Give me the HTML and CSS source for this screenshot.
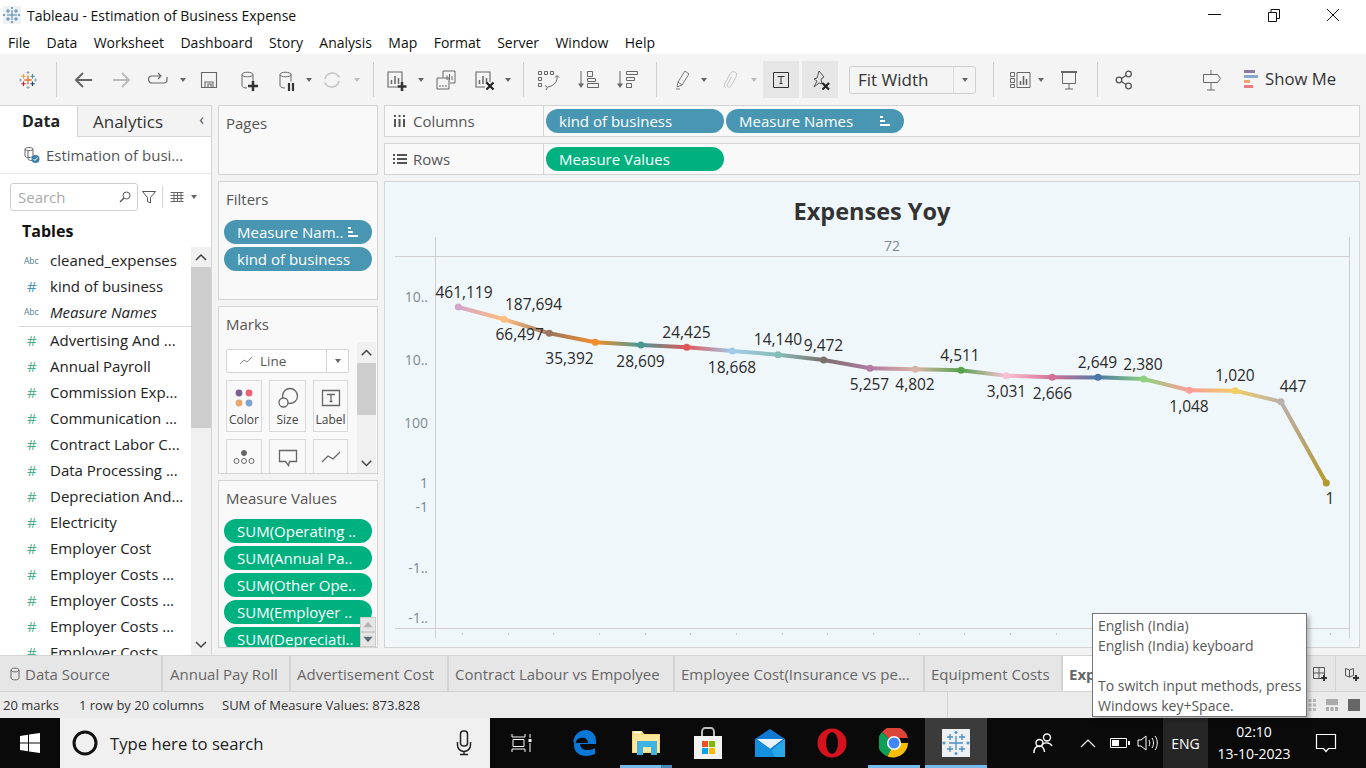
FILE: index.html
```html
<!DOCTYPE html>
<html lang="en">

<head>
  <meta charset="UTF-8" />
  <title>Tableau - Estimation of Business Expense</title>
  <link rel="stylesheet" href="styles.css">
</head>

<body>
  <svg class="defs" width="0" height="0">
    <symbol id="caret" viewBox="0 0 8 8"><path d="M1 2h6L4 6z" fill="#666" /></symbol>
    <symbol id="caret-off" viewBox="0 0 8 8"><path d="M1 2h6L4 6z" fill="#bbb" /></symbol>
    <symbol id="sortbars" viewBox="0 0 10 10"><path d="M0 0h3v2H0zM0 4h5v2H0zM0 8h10v2H0z" fill="#fff" /></symbol>
  </svg>

  <!-- title bar -->
  <div class="titlebar">
    <svg class="app-icon" width="18" height="18" viewBox="0 0 18 18">
      <rect width="18" height="18" fill="#eef1f4" />
      <path d="M9 4v10M4 9h10M5 3v4M3 5h4M13 3v4M11 5h4M5 11v4M3 13h4M13 11v4M11 13h4M9 1v2M8 2h2M9 15v2M8 16h2M1 8v2M0 9h2M16 8v2M15 9h2" stroke="#4f86ad" fill="none" />
    </svg>
    <span class="title-text">Tableau - Estimation of Business Expense</span>
    <div class="winbtns">
      <svg width="16" height="16" viewBox="0 0 16 16"><path d="M1 7.500h13" stroke="#111" /></svg>
      <svg width="16" height="16" viewBox="0 0 16 16"><path d="M2.500 5.500h8v9h-8zM5 5V2.500h8.500v9H11" stroke="#111" fill="none" /></svg>
      <svg width="16" height="16" viewBox="0 0 16 16"><path d="M2 2l12 12M14 2L2 14" stroke="#111" /></svg>
    </div>
  </div>

  <!-- menu -->
  <div class="menubar">
    <span>File</span><span>Data</span><span>Worksheet</span><span>Dashboard</span><span>Story</span><span>Analysis</span><span>Map</span><span>Format</span><span>Server</span><span>Window</span><span>Help</span>
  </div>

  <!-- toolbar -->
  <div class="toolbar">
    <svg class="logo" viewBox="0 0 24 24">
      <path d="M12 6v12M7 12h10" stroke="#e8762d" stroke-width="1.800" />
      <path d="M6 4v6M3 7h6" stroke="#f2a02e" stroke-width="1.600" />
      <path d="M18 4v6M15 7h6" stroke="#5b879b" stroke-width="1.600" />
      <path d="M6 14v6M3 17h6" stroke="#c72035" stroke-width="1.600" />
      <path d="M18 14v6M15 17h6" stroke="#1f447a" stroke-width="1.600" />
      <path d="M12 0v4M10 2h4M12 20v4M10 22h4M2 10v4M0 12h4M22 10v4M20 12h4" stroke="#8aa0b2" stroke-width="1.300" />
    </svg>
    <i class="sep m19"></i>
    <svg class="tool m14" viewBox="0 0 24 24"><path d="M21 12H5M12 5l-7 7 7 7" fill="none" stroke="#666" stroke-width="2" /></svg>
    <svg class="tool m15" viewBox="0 0 24 24"><path d="M3 12h16M12 5l7 7-7 7" fill="none" stroke="#bcbcbc" stroke-width="2" /></svg>
    <svg class="tool m12" viewBox="0 0 24 24"><path d="M14 8H6a3 3 0 0 0 0 7h12a3 3 0 0 0 3-3.500V9M12 5l3 3-3 3" fill="none" stroke="#666" stroke-width="1.200" /></svg>
    <svg class="caret m9"><use href="#caret" /></svg>
    <svg class="tool m10" viewBox="0 0 24 24"><path d="M4.500 4.500h15v15h-15zM8 19v-5h8v5M11 19v-3h3v3" fill="none" stroke="#666" stroke-width="1.100" /></svg>
    <svg class="tool m15" viewBox="0 0 24 24">
      <path d="M6 6.500c0-3 11-3 11 0v7M6 6.500v11c0 1.500 2 2.500 5 2.500M6 6.500c0 3 11 3 11 0" fill="none" stroke="#666" />
      <path d="M17 13v10M12 18h10" stroke="#333" stroke-width="2.500" />
    </svg>
    <svg class="tool m14" viewBox="0 0 24 24">
      <path d="M6 6.500c0-3 11-3 11 0v7M6 6.500v11c0 1.500 2 2.500 5 2.500M6 6.500c0 3 11 3 11 0" fill="none" stroke="#666" />
      <path d="M15 15v8M19 15v8" stroke="#333" stroke-width="2.200" />
    </svg>
    <svg class="caret m7"><use href="#caret" /></svg>
    <svg class="tool m7" viewBox="0 0 24 24"><path d="M5 11a7.500 7.500 0 0 1 13-3.500l1.500 2M19 13a7.500 7.500 0 0 1-13 3.500L4.500 14.500" fill="none" stroke="#c4c4c4" stroke-width="1.500" /></svg>
    <svg class="caret m9"><use href="#caret-off" /></svg>
    <i class="sep m12"></i>
    <svg class="tool m10" viewBox="0 0 24 24">
      <path d="M18 16V4H4v15h9" fill="none" stroke="#666" stroke-width="1.100" />
      <path d="M7.500 16v-4M11 16V8M14.500 16v-6" stroke="#666" stroke-width="1.500" />
      <path d="M18 14v9M13.500 18.500h9" stroke="#333" stroke-width="2.500" />
    </svg>
    <svg class="caret m9"><use href="#caret" /></svg>
    <svg class="tool m9" viewBox="0 0 24 24">
      <path d="M9 9.500V3h12v12h-5M3 10h12v11H3z" fill="none" stroke="#666" />
      <path d="M13 12V7.500M15.500 12V6M18 12V8M6 19v-2M9 19v-2M12 19v-2" stroke="#666" />
    </svg>
    <svg class="tool m14" viewBox="0 0 24 24">
      <path d="M18 14V4H4v15h9" fill="none" stroke="#666" stroke-width="1.100" />
      <path d="M7.500 16v-4M11 16V8M14.500 16v-6" stroke="#666" stroke-width="1.500" />
      <path d="M14.500 14.500l7 7M21.500 14.500l-7 7" stroke="#222" stroke-width="2.200" />
    </svg>
    <svg class="caret m8"><use href="#caret" /></svg>
    <i class="sep m11"></i>
    <svg class="tool m12" viewBox="0 0 24 24" fill="none" stroke="#666">
      <path d="M2.500 3.500h3v3h-3zM8.500 3.500h3v3h-3zM14.500 3.500h3v3h-3zM2.500 9.500h3v3h-3zM2.500 15.500h3v3h-3z" />
      <path d="M21 8c1 5-3 10-9 11M9 17.500l2.500 2 -1.500 2.500M19 9.500l2-2 2 2" />
    </svg>
    <svg class="tool m16" viewBox="0 0 24 24" fill="none" stroke="#666">
      <path d="M5 3v15" />
      <path d="M2 15.500h6L5 20z" fill="#666" stroke="none" />
      <path d="M11.500 3.500h5v5h-5zM11.500 10.500h8v3h-8zM11.500 15.500h11v4h-11z" />
    </svg>
    <svg class="tool m15" viewBox="0 0 24 24" fill="none" stroke="#666">
      <path d="M5 3v15" />
      <path d="M2 15.500h6L5 20z" fill="#666" stroke="none" />
      <path d="M11.500 3.500h11v3h-11zM11.500 9.500h8v3h-8zM11.500 15.500h5v4h-5z" />
    </svg>
    <i class="sep m17"></i>
    <svg class="tool m13" viewBox="0 0 24 24"><path d="M15 3l4 3-7 11-4-3zM8 14l-1 5 5-2M6 21h4" fill="none" stroke="#777" /></svg>
    <svg class="caret m6"><use href="#caret" /></svg>
    <svg class="tool m10" viewBox="0 0 24 24"><path d="M8 20c-2-1-2-3-1-5l5-9c1-2 3-3 5-2s2 3 1 5l-5 9c-.6 1-2 1.500-3 1s-1-2-.5-3l4-7" fill="none" stroke="#c4c4c4" /></svg>
    <svg class="caret m8"><use href="#caret-off" /></svg>
    <div class="tbox m5">
      <svg width="24" height="24" viewBox="0 0 24 24"><path d="M4.500 4.500h15v15h-15zM8.500 8.500h7M12 8.500v7M10.500 15.500h3" fill="none" stroke="#333" /></svg>
    </div>
    <div class="tbox m3">
      <svg width="24" height="24" viewBox="0 0 24 24">
        <path d="M11 3l5 6-3 2 1 5-3-1-5 4 3-6-3-2 3-1z" fill="none" stroke="#555" />
        <path d="M14.500 15l6.500 6.500M21 15l-6.500 6.500" stroke="#222" stroke-width="2.200" />
      </svg>
    </div>
    <div class="fit m11"><span class="fit-text">Fit Width</span><span class="fit-arrow"><svg class="caret"><use href="#caret" /></svg></span></div>
    <i class="sep m17"></i>
    <svg class="tool m14" viewBox="0 0 24 24" fill="none" stroke="#666">
      <path d="M2.500 4.500h4v4h-4zM2.500 10.500h4v4h-4zM2.500 16.500h4v3h-4zM9 4.500h13v15H9z" />
      <path d="M12.500 17v-4M15.500 17V8M18.500 17v-6" stroke-width="1.600" />
    </svg>
    <svg class="caret m5"><use href="#caret" /></svg>
    <svg class="tool m12" viewBox="0 0 24 24" fill="none" stroke="#666"><path d="M4 4h16" stroke-width="2" /><path d="M5.500 4.500v11h13v-11M12 15.500V21M8 21h8" /></svg>
    <i class="sep m16"></i>
    <svg class="tool m14" viewBox="0 0 24 24" fill="none" stroke="#555" stroke-width="1.300"><circle cx="16.500" cy="6" r="2.800" /><circle cx="16.500" cy="18" r="2.800" /><circle cx="7" cy="12" r="2.800" /><path d="M9.500 10.500L14 7.500M9.500 13.500L14 16.500" /></svg>
    <svg class="tool m63" viewBox="0 0 24 24" fill="none" stroke="#666"><path d="M12 2v4M12 15v7M8 22h8M4.500 6.500h14l3 4-3 4h-14z" /></svg>
    <div class="showme m21">
      <svg width="14" height="20" viewBox="0 0 14 20"><path d="M0 1h11v3H0z" fill="#8a7a9b" /><path d="M0 6h14v3H0z" fill="#8aa8cc" /><path d="M0 11h6v3H0z" fill="#eda56f" /><path d="M0 16h9v3H0z" fill="#ec7a85" /></svg>
      <span>Show Me</span>
    </div>
  </div>

  <div class="workspace">
    <!-- data pane -->
    <div class="datapane">
      <div class="panetabs">
        <div class="panetab active">Data</div>
        <div class="panetab">Analytics<span class="chev">&#8249;</span></div>
      </div>
      <div class="source">
        <svg width="18" height="18" viewBox="0 0 18 18" fill="none" stroke="#666"><path d="M2 3c0-2 8-2 8 0v7c0 1-2 1.500-4 1.500S2 11 2 10zM2 3c0 2 8 2 8 0M5 5v8c0 1 2 1.500 4 1.500" /><circle cx="12.500" cy="13" r="4" fill="#3f80ab" stroke="none" /><path d="M10.500 13l1.500 1.500 2.500-3" stroke="#fff" /></svg>
        <span>Estimation of busi...</span>
      </div>
      <div class="searchrow">
        <div class="search"><span>Search</span>
          <svg width="14" height="14" viewBox="0 0 14 14" fill="none" stroke="#555"><circle cx="8.500" cy="5.500" r="3.500" /><path d="M6 8l-4 4" stroke-width="1.400" /></svg>
        </div>
        <svg class="funnel" width="16" height="16" viewBox="0 0 16 16" fill="none" stroke="#555"><path d="M1.500 2.500h13L9.500 8.500V14l-3-1.500v-4z" /></svg>
        <i class="vline"></i>
        <svg width="14" height="12" viewBox="0 0 14 12" fill="none" stroke="#666"><path d="M.5 1.500h13M.5 4.500h13M.5 7.500h13M.5 10.500h13M4 1v10M7.500 1v10M11 1v10" /></svg>
        <svg class="caret" viewBox="0 0 8 8"><use href="#caret" /></svg>
      </div>
      <h3 class="tables">Tables</h3>
      <div class="fieldarea">
        <ul class="fields">
          <li><b class="abc">Abc</b>cleaned_expenses</li>
          <li><b class="hash dim">#</b>kind of business</li>
          <li class="schema-end"><b class="abc">Abc</b><em>Measure Names</em></li>
          <li><b class="hash">#</b>Advertising And ...</li>
          <li><b class="hash">#</b>Annual Payroll</li>
          <li><b class="hash">#</b>Commission Exp...</li>
          <li><b class="hash">#</b>Communication ...</li>
          <li><b class="hash">#</b>Contract Labor C...</li>
          <li><b class="hash">#</b>Data Processing ...</li>
          <li><b class="hash">#</b>Depreciation And...</li>
          <li><b class="hash">#</b>Electricity</li>
          <li><b class="hash">#</b>Employer Cost</li>
          <li><b class="hash">#</b>Employer Costs ...</li>
          <li><b class="hash">#</b>Employer Costs ...</li>
          <li><b class="hash">#</b>Employer Costs ...</li>
          <li><b class="hash">#</b>Employer Costs</li>
        </ul>
        <div class="vscroll field-scroll">
          <svg class="arrow" viewBox="0 0 20 20"><path d="M5 13l5-5 5 5" fill="none" stroke="#444" stroke-width="1.500" /></svg>
          <div class="thumb"></div>
          <svg class="arrow end" viewBox="0 0 20 20"><path d="M5 7l5 5 5-5" fill="none" stroke="#444" stroke-width="1.500" /></svg>
        </div>
      </div>
    </div>

    <!-- shelves cards -->
    <div class="cards">
      <div class="card pages"><div class="card-title">Pages</div></div>
      <div class="card filters">
        <div class="card-title">Filters</div>
        <div class="pill blue wide">Measure Nam..<svg class="sort" viewBox="0 0 10 10"><use href="#sortbars" /></svg></div>
        <div class="pill blue wide">kind of business</div>
      </div>
      <div class="card marks">
        <div class="card-title">Marks</div>
        <div class="marks-body">
          <div class="marks-main">
            <div class="marktype">
              <span class="mt-label">
                <svg width="14" height="10" viewBox="0 0 14 10"><path d="M1 8l4-4 3 2 5-5" fill="none" stroke="#888" /></svg>
                Line
              </span>
              <span class="mt-arrow"><svg class="caret"><use href="#caret" /></svg></span>
            </div>
            <div class="markbtns">
              <div class="markbtn">
                <svg width="24" height="24" viewBox="0 0 24 24"><circle cx="7" cy="7" r="3.400" fill="#7b5e93" /><circle cx="17" cy="7" r="3.400" fill="#ec5e78" /><circle cx="7" cy="17" r="3.400" fill="#eda56f" /><circle cx="17" cy="17" r="3.400" fill="#7ea3cf" /></svg>
                <span>Color</span>
              </div>
              <div class="markbtn">
                <svg width="24" height="24" viewBox="0 0 24 24" fill="none" stroke="#666" stroke-width="1.300"><circle cx="14" cy="10" r="7.500" /><circle cx="7.500" cy="16.500" r="4.500" fill="#f9f9f9" /></svg>
                <span>Size</span>
              </div>
              <div class="markbtn">
                <svg width="24" height="24" viewBox="0 0 24 24" fill="none" stroke="#666" stroke-width="1.300"><path d="M3.500 4.500h17v15h-17zM8 8.500h8M12 8.500v7M10.500 15.500h3" /></svg>
                <span>Label</span>
              </div>
              <div class="markbtn">
                <svg width="24" height="24" viewBox="0 0 24 24" fill="none" stroke="#666"><circle cx="12" cy="8" r="2.500" fill="#666" /><circle cx="4.500" cy="16" r="2.500" /><circle cx="12" cy="16" r="2.500" /><circle cx="19.500" cy="16" r="2.500" /></svg>
              </div>
              <div class="markbtn">
                <svg width="24" height="24" viewBox="0 0 24 24" fill="none" stroke="#666" stroke-width="1.300"><path d="M3.500 5.500h17v11h-7l-1 4-3-4h-6z" /></svg>
              </div>
              <div class="markbtn">
                <svg width="24" height="24" viewBox="0 0 24 24" fill="none" stroke="#666" stroke-width="1.300"><path d="M3 17l6-6 5 3 7-7" /></svg>
              </div>
            </div>
          </div>
          <div class="vscroll marks-scroll">
            <svg class="arrow" viewBox="0 0 20 20"><path d="M5 13l5-5 5 5" fill="none" stroke="#444" stroke-width="1.500" /></svg>
            <div class="thumb"></div>
            <svg class="arrow end" viewBox="0 0 20 20"><path d="M5 7l5 5 5-5" fill="none" stroke="#444" stroke-width="1.500" /></svg>
          </div>
        </div>
      </div>
      <div class="card values">
        <div class="card-title">Measure Values</div>
        <div class="pill green wide">SUM(Operating ..</div>
        <div class="pill green wide">SUM(Annual Pa..</div>
        <div class="pill green wide">SUM(Other Ope..</div>
        <div class="pill green wide">SUM(Employer ..</div>
        <div class="pill green wide">SUM(Depreciati..</div>
        <div class="miniscroll">
          <span><svg viewBox="0 0 14 14"><path d="M2 10h10L7 4z" fill="#b3b3b3" /></svg></span>
          <span><svg viewBox="0 0 14 14"><path d="M2 4h10L7 10z" fill="#5d6b78" /></svg></span>
        </div>
      </div>
    </div>

    <!-- shelves and view -->
    <div class="viewcol">
      <div class="shelf">
        <div class="shelf-label">
          <svg width="14" height="12" viewBox="0 0 14 12"><path d="M2 4v8M6.500 4v8M11 4v8M2 0v2M6.500 0v2M11 0v2" stroke="#555" stroke-width="2" /></svg>
          <span>Columns</span>
        </div>
        <div class="pill blue long">kind of business</div>
        <div class="pill blue long">Measure Names<svg class="sort" viewBox="0 0 10 10"><use href="#sortbars" /></svg></div>
      </div>
      <div class="shelf">
        <div class="shelf-label">
          <svg width="14" height="12" viewBox="0 0 14 12"><path d="M0 2h2M4 2h10M0 6h2M4 6h10M0 10h2M4 10h10" stroke="#555" stroke-width="2" /></svg>
          <span>Rows</span>
        </div>
        <div class="pill green long">Measure Values</div>
      </div>
      <div class="view">
        <svg class="chart" width="976" height="467" viewBox="384 181 976 467">
          <defs>
            <linearGradient id="s1" gradientUnits="userSpaceOnUse" x1="458.300" y1="307" x2="504" y2="319.300"><stop offset="0" stop-color="#d4a6c8" /><stop offset="1" stop-color="#ffbe7d" /></linearGradient>
            <linearGradient id="s2" gradientUnits="userSpaceOnUse" x1="504" y1="319.300" x2="549.300" y2="333.300"><stop offset="0" stop-color="#ffbe7d" /><stop offset="1" stop-color="#9d7660" /></linearGradient>
            <linearGradient id="s3" gradientUnits="userSpaceOnUse" x1="549.300" y1="333.300" x2="595.300" y2="342.300"><stop offset="0" stop-color="#9d7660" /><stop offset="1" stop-color="#f28e2b" /></linearGradient>
            <linearGradient id="s4" gradientUnits="userSpaceOnUse" x1="595.300" y1="342.300" x2="641" y2="345"><stop offset="0" stop-color="#f28e2b" /><stop offset="1" stop-color="#499894" /></linearGradient>
            <linearGradient id="s5" gradientUnits="userSpaceOnUse" x1="641" y1="345" x2="686.700" y2="347.300"><stop offset="0" stop-color="#499894" /><stop offset="1" stop-color="#e15759" /></linearGradient>
            <linearGradient id="s6" gradientUnits="userSpaceOnUse" x1="686.700" y1="347.300" x2="732.300" y2="351"><stop offset="0" stop-color="#e15759" /><stop offset="1" stop-color="#a0cbe8" /></linearGradient>
            <linearGradient id="s7" gradientUnits="userSpaceOnUse" x1="732.300" y1="351" x2="778" y2="354.700"><stop offset="0" stop-color="#a0cbe8" /><stop offset="1" stop-color="#86bcb6" /></linearGradient>
            <linearGradient id="s8" gradientUnits="userSpaceOnUse" x1="778" y1="354.700" x2="823.700" y2="360"><stop offset="0" stop-color="#86bcb6" /><stop offset="1" stop-color="#79706e" /></linearGradient>
            <linearGradient id="s9" gradientUnits="userSpaceOnUse" x1="823.700" y1="360" x2="870" y2="368.300"><stop offset="0" stop-color="#79706e" /><stop offset="1" stop-color="#b07aa1" /></linearGradient>
            <linearGradient id="s10" gradientUnits="userSpaceOnUse" x1="870" y1="368.300" x2="915.300" y2="369.300"><stop offset="0" stop-color="#b07aa1" /><stop offset="1" stop-color="#d7b5a6" /></linearGradient>
            <linearGradient id="s11" gradientUnits="userSpaceOnUse" x1="915.300" y1="369.300" x2="961" y2="370.300"><stop offset="0" stop-color="#d7b5a6" /><stop offset="1" stop-color="#59a14f" /></linearGradient>
            <linearGradient id="s12" gradientUnits="userSpaceOnUse" x1="961" y1="370.300" x2="1006.300" y2="375.700"><stop offset="0" stop-color="#59a14f" /><stop offset="1" stop-color="#fabfd2" /></linearGradient>
            <linearGradient id="s13" gradientUnits="userSpaceOnUse" x1="1006.300" y1="375.700" x2="1052.300" y2="377.300"><stop offset="0" stop-color="#fabfd2" /><stop offset="1" stop-color="#d37295" /></linearGradient>
            <linearGradient id="s14" gradientUnits="userSpaceOnUse" x1="1052.300" y1="377.300" x2="1098" y2="377.400"><stop offset="0" stop-color="#d37295" /><stop offset="1" stop-color="#4e79a7" /></linearGradient>
            <linearGradient id="s15" gradientUnits="userSpaceOnUse" x1="1098" y1="377.300" x2="1143.700" y2="379"><stop offset="0" stop-color="#4e79a7" /><stop offset="1" stop-color="#8cd17d" /></linearGradient>
            <linearGradient id="s16" gradientUnits="userSpaceOnUse" x1="1143.700" y1="379" x2="1189.300" y2="390.300"><stop offset="0" stop-color="#8cd17d" /><stop offset="1" stop-color="#ff9d9a" /></linearGradient>
            <linearGradient id="s17" gradientUnits="userSpaceOnUse" x1="1189.300" y1="390.300" x2="1235.300" y2="390.700"><stop offset="0" stop-color="#ff9d9a" /><stop offset="1" stop-color="#f1ce63" /></linearGradient>
            <linearGradient id="s18" gradientUnits="userSpaceOnUse" x1="1235.300" y1="390.700" x2="1281" y2="401.700"><stop offset="0" stop-color="#f1ce63" /><stop offset="1" stop-color="#bab0ac" /></linearGradient>
            <linearGradient id="s19" gradientUnits="userSpaceOnUse" x1="1281" y1="401.700" x2="1326.300" y2="483"><stop offset="0" stop-color="#bab0ac" /><stop offset="1" stop-color="#b6992d" /></linearGradient>
          </defs>

          <text class="chart-title" x="872" y="220">Expenses Yoy</text>
          <text class="axis mid" x="892" y="251">72</text>

          <path class="rule" d="M435.500 237v401M1349.500 237v401M395 256.500h954.500M395 628.500h954.500" />

          <g class="axis end">
            <text x="428" y="302">10..</text>
            <text x="428" y="365">10..</text>
            <text x="428" y="428">100</text>
            <text x="428" y="488">1</text>
            <text x="428" y="512">-1</text>
            <text x="428" y="573">-1..</text>
            <text x="428" y="623">-1..</text>
          </g>

          <path class="ticks" d="M462 634h1M508 634h1M553 634h1M599 634h1M645 634h1M690 634h1M736 634h1M782 634h1M827 634h1M873 634h1M919 634h1M964 634h1M1010 634h1M1056 634h1M1101 634h1M1147 634h1M1193 634h1M1238 634h1M1284 634h1M1330 634h1" />

          <g class="seg">
            <path stroke="url(#s1)" d="M458.300 307L504 319.300" />
            <path stroke="url(#s2)" d="M504 319.300L549.300 333.300" />
            <path stroke="url(#s3)" d="M549.300 333.300L595.300 342.300" />
            <path stroke="url(#s4)" d="M595.300 342.300L641 345" />
            <path stroke="url(#s5)" d="M641 345L686.700 347.300" />
            <path stroke="url(#s6)" d="M686.700 347.300L732.300 351" />
            <path stroke="url(#s7)" d="M732.300 351L778 354.700" />
            <path stroke="url(#s8)" d="M778 354.700L823.700 360" />
            <path stroke="url(#s9)" d="M823.700 360L870 368.300" />
            <path stroke="url(#s10)" d="M870 368.300L915.300 369.300" />
            <path stroke="url(#s11)" d="M915.300 369.300L961 370.300" />
            <path stroke="url(#s12)" d="M961 370.300L1006.300 375.700" />
            <path stroke="url(#s13)" d="M1006.300 375.700L1052.300 377.300" />
            <path stroke="url(#s14)" d="M1052.300 377.300L1098 377.400" />
            <path stroke="url(#s15)" d="M1098 377.300L1143.700 379" />
            <path stroke="url(#s16)" d="M1143.700 379L1189.300 390.300" />
            <path stroke="url(#s17)" d="M1189.300 390.300L1235.300 390.700" />
            <path stroke="url(#s18)" d="M1235.300 390.700L1281 401.700" />
            <path stroke="url(#s19)" d="M1281 401.700L1326.300 483" />
          </g>

          <g class="dots">
            <circle cx="458.300" cy="307" fill="#d4a6c8" />
            <circle cx="504" cy="319.300" fill="#ffbe7d" />
            <circle cx="549.300" cy="333.300" fill="#9d7660" />
            <circle cx="595.300" cy="342.300" fill="#f28e2b" />
            <circle cx="641" cy="345" fill="#499894" />
            <circle cx="686.700" cy="347.300" fill="#e15759" />
            <circle cx="732.300" cy="351" fill="#a0cbe8" />
            <circle cx="778" cy="354.700" fill="#86bcb6" />
            <circle cx="823.700" cy="360" fill="#79706e" />
            <circle cx="870" cy="368.300" fill="#b07aa1" />
            <circle cx="915.300" cy="369.300" fill="#d7b5a6" />
            <circle cx="961" cy="370.300" fill="#59a14f" />
            <circle cx="1006.300" cy="375.700" fill="#fabfd2" />
            <circle cx="1052.300" cy="377.300" fill="#d37295" />
            <circle cx="1098" cy="377.300" fill="#4e79a7" />
            <circle cx="1143.700" cy="379" fill="#8cd17d" />
            <circle cx="1189.300" cy="390.300" fill="#ff9d9a" />
            <circle cx="1235.300" cy="390.700" fill="#f1ce63" />
            <circle cx="1281" cy="401.700" fill="#bab0ac" />
            <circle cx="1326.300" cy="483" fill="#b6992d" />
          </g>

          <g class="labels">
            <text x="464" y="298">461,119</text>
            <text x="533.500" y="310">187,694</text>
            <text x="519.600" y="340">66,497</text>
            <text x="569.500" y="364">35,392</text>
            <text x="640.500" y="367">28,609</text>
            <text x="686.500" y="338">24,425</text>
            <text x="732" y="373">18,668</text>
            <text x="778" y="345">14,140</text>
            <text x="823.500" y="351">9,472</text>
            <text x="869.500" y="390">5,257</text>
            <text x="915" y="390">4,802</text>
            <text x="960" y="361">4,511</text>
            <text x="1006.500" y="397">3,031</text>
            <text x="1052.500" y="399">2,666</text>
            <text x="1097.500" y="368">2,649</text>
            <text x="1143" y="370">2,380</text>
            <text x="1189" y="412">1,048</text>
            <text x="1235" y="381">1,020</text>
            <text x="1293" y="392">447</text>
            <text x="1330" y="504">1</text>
          </g>
        </svg>
      </div>
    </div>
  </div>

  <!-- sheet tabs -->
  <div class="tabs">
    <div class="tab source-tab">
      <svg width="10" height="14" viewBox="0 0 10 14" fill="none" stroke="#666"><path d="M1 3c0-2.500 8-2.500 8 0v8c0 2.500-8 2.500-8 0zM1 3c0 2.500 8 2.500 8 0" /></svg>
      Data Source
    </div>
    <div class="tab t-annual">Annual Pay Roll</div>
    <div class="tab t-adv">Advertisement Cost</div>
    <div class="tab t-contract">Contract Labour vs Empolyee</div>
    <div class="tab t-emp">Employee Cost(Insurance vs pe...</div>
    <div class="tab t-equip">Equipment Costs</div>
    <div class="tab t-exp">Exp</div>
    <div class="tab-actions">
      <span><svg width="16" height="16" viewBox="0 0 16 16" fill="none" stroke="#555"><path d="M1.500 1.500h11v11h-11zM7 1.500v11M1.500 7h11" /><path d="M12 9v6M9 12h6" stroke="#333" stroke-width="2" /></svg></span>
      <span><svg width="16" height="16" viewBox="0 0 16 16" fill="none" stroke="#555"><path d="M1.500 2.500l4 1.500 4-1.500v7l-4 1.500-4-1.500zM5.500 4v7" /><path d="M12 9v6M9 12h6" stroke="#333" stroke-width="2" /></svg></span>
    </div>
  </div>

  <!-- status bar -->
  <div class="statusbar">
    <span class="st-marks">20 marks</span>
    <span class="st-rows">1 row by 20 columns</span>
    <span class="st-sum">SUM of Measure Values: 873.828</span>
    <div class="st-right">
      <svg width="12" height="12" viewBox="0 0 12 12"><path d="M0 0h3v3H0zM4.500 0h3v3h-3zM9 0h3v3H9zM0 4.500h3v3H0zM4.500 4.500h3v3h-3zM9 4.500h3v3H9zM0 9h3v3H0zM4.500 9h3v3h-3zM9 9h3v3H9z" fill="#bbb" /></svg>
      <svg width="12" height="12" viewBox="0 0 12 12"><path d="M0 0h12v6H0zM0 8h3v4H0zM4.500 8h3v4h-3zM9 8h3v4H9z" fill="#aaa" /></svg>
      <svg width="12" height="12" viewBox="0 0 12 12"><path d="M0 0h12v12H0z" fill="#666" /></svg>
    </div>
  </div>

  <!-- windows taskbar -->
  <div class="taskbar">
    <div class="start">
      <svg width="20" height="20" viewBox="0 0 20 20"><path d="M0 3l8-1.200V9.500H0zM9 1.600L20 0v9.500H9zM0 10.500h8v7.700L0 17zM9 10.500h11V20L9 18.400z" fill="#fff" /></svg>
    </div>
    <div class="searchbox">
      <svg width="26" height="26" viewBox="0 0 26 26"><circle cx="13" cy="13" r="11" fill="none" stroke="#111" stroke-width="3" /></svg>
      <span>Type here to search</span>
      <svg class="mic" width="16" height="26" viewBox="0 0 16 26" fill="none" stroke="#222" stroke-width="1.500"><rect x="4.500" y="1" width="7" height="15" rx="3" /><path d="M1.500 12v3a6.500 6.500 0 0 0 13 0v-3M8 21.500V24M4 24.500h8" /></svg>
    </div>
    <div class="task taskview">
      <svg width="22" height="20" viewBox="0 0 22 20" fill="none" stroke="#fff"><path d="M1 1v3h13V1M2 6.500h11v7H2zM1 19v-3h13v3M19 1v4M19 10v9" /><rect x="17.500" y="6" width="3" height="3" fill="#fff" stroke="none" /></svg>
    </div>
    <div class="task">
      <svg width="26" height="28" viewBox="0 0 26 28"><path d="M2 14C3 6 8 1 15 1c6 0 10 5 10 11v3H9c0 6 8 8 15 4v6c-9 4-21 2-21-9 0-4 2-6 5-8-2 2-3 4-3 6h12c0-6-8-8-15 0z" fill="#0a78d7" /></svg>
    </div>
    <div class="task open split">
      <svg width="30" height="28" viewBox="0 0 30 28"><path d="M1 2h10l2 3h16v19H1z" fill="#f6d97c" /><path d="M2 6h26v17H2z" fill="#fde79a" /><path d="M6 12h20l0 14h-6v-8h-8v8H6z" fill="#3fb3e6" /><path d="M3 2.500h7v2H3z" fill="#fff" /></svg>
    </div>
    <div class="task">
      <svg width="30" height="32" viewBox="0 0 30 32"><path d="M1 9h28v23H1z" fill="#f2f2f2" /><path d="M9 9V5c0-3 2-4 3-4h6c1 0 3 1 3 4v4" fill="none" stroke="#bdbdbd" stroke-width="2" /><path d="M9 14h6v6H9z" fill="#f25022" /><path d="M16 14h6v6h-6z" fill="#7fba00" /><path d="M9 21h6v6H9z" fill="#00a4ef" /><path d="M16 21h6v6h-6z" fill="#ffb900" /></svg>
    </div>
    <div class="task">
      <svg width="30" height="28" viewBox="0 0 30 28"><path d="M0 10L15 0l15 10v18H0z" fill="#0f78d4" /><path d="M2 10l13 10 13-10H2z" fill="#e8f2fb" /><path d="M30 10v18H8z" fill="#28a8ea" /><path d="M0 28V10l16 10 4 8z" fill="#1490df" /></svg>
    </div>
    <div class="task">
      <svg width="30" height="30" viewBox="0 0 30 30"><circle cx="15" cy="15" r="14.500" fill="#d6121f" /><ellipse cx="15" cy="15" rx="6" ry="11" fill="#0a0a0a" /></svg>
    </div>
    <div class="task open">
      <svg width="30" height="30" viewBox="0 0 30 30"><path d="M15 15L3 4a15 15 0 0 1 26 6H15z" fill="#db4437" /><path d="M15 15L8.500 28.500A15 15 0 0 1 3 4z" fill="#0f9d58" /><path d="M15 15h14a15 15 0 0 1-20.500 13.500z" fill="#fbbc05" /><circle cx="15" cy="15" r="7" fill="#fff" /><circle cx="15" cy="15" r="5.500" fill="#4285f4" /></svg>
    </div>
    <div class="task active open">
      <svg width="28" height="28" viewBox="0 0 28 28"><rect width="28" height="28" fill="#eef1f4" /><path d="M14 7v14M7 14h14M8 5v6M5 8h6M20 5v6M17 8h6M8 17v6M5 20h6M20 17v6M17 20h6M14 2v3M12.500 3.500h3M14 23v3M12.500 24.500h3M2 12.500v3M.5 14h3M26 12.500v3M24.500 14h3" stroke="#4f8fbf" stroke-width="1.300" fill="none" /></svg>
    </div>
    <div class="tray">
      <svg class="tr-people" width="22" height="22" viewBox="0 0 22 22" fill="none" stroke="#fff" stroke-width="1.400"><circle cx="15" cy="5.500" r="3.500" /><path d="M10 13c1-3 8-3 10 1" /><circle cx="7.500" cy="11" r="3.500" /><path d="M2 21c0-6 3-7 5.500-7s4.500 2 5 6" /></svg>
      <svg class="tr-up" width="18" height="10" viewBox="0 0 18 10" fill="none" stroke="#fff" stroke-width="1.200"><path d="M2 9l7-7 7 7" /></svg>
      <svg class="tr-batt" width="20" height="12" viewBox="0 0 20 12"><path d="M.5 1.500h16v9H.5z" fill="none" stroke="#fff" /><path d="M2 3h7v6H2z" fill="#fff" /><path d="M18 4h2v4h-2z" fill="#fff" /></svg>
      <svg class="tr-vol" width="22" height="16" viewBox="0 0 22 16" fill="none" stroke="#fff"><path d="M1 5h3l5-4v14l-5-4H1zM12 5c1 2 1 4 0 6M15 3c2 3 2 7 0 10M18 1c3 4 3 10 0 14" /></svg>
      <div class="eng">ENG</div>
      <div class="clock"><div>02:10</div><div>13-10-2023</div></div>
      <svg class="tr-note" width="22" height="22" viewBox="0 0 22 22" fill="none" stroke="#fff" stroke-width="1.200"><path d="M1.500 2.500h19v14h-7l-2.500 3-2.500-3h-7z" /></svg>
    </div>
  </div>

  <div class="tooltip">
    <div>English (India)</div>
    <div>English (India) keyboard</div>
    <div>&nbsp;</div>
    <div>To switch input methods, press</div>
    <div>Windows key+Space.</div>
  </div>
</body>

</html>
```

FILE: styles.css
```css
* {
  box-sizing: border-box;
}

html,
body {
  margin: 0;
  padding: 0;
  height: 768px;
  overflow: hidden;
}

body {
  position: relative;
  width: 1366px;
  font-family: "Open Sans", "Noto Sans", sans-serif;
  font-size: 15px;
  color: #333;
  background: #f3f3f3;
}

.defs {
  display: block;
  height: 0;
}

/* title + menu */
.titlebar {
  height: 30px;
  background: #fff;
  display: flex;
  align-items: center;
  padding-left: 3px;
}

.title-text {
  margin-left: 6px;
  font-size: 14px;
  color: #111;
}

.winbtns {
  margin-left: auto;
  display: flex;
  gap: 43px;
  padding-right: 25px;
}

.menubar {
  height: 24px;
  background: #fff;
  display: flex;
  align-items: center;
  padding-left: 8px;
  gap: 16.400px;
  font-size: 14px;
  color: #111;
}

/* toolbar */
.toolbar {
  height: 51px;
  background: #f4f4f4;
  display: flex;
  align-items: center;
}

.logo {
  width: 18px;
  height: 18px;
  margin-left: 19px;
  flex: none;
}

.tool {
  width: 24px;
  height: 24px;
  flex: none;
}

.caret {
  width: 8px;
  height: 8px;
  flex: none;
}

.sep {
  width: 1px;
  height: 35px;
  background: #d0d0d0;
  flex: none;
}

.m3 { margin-left: 3px; }
.m5 { margin-left: 5px; }
.m6 { margin-left: 6px; }
.m7 { margin-left: 7px; }
.m8 { margin-left: 8px; }
.m9 { margin-left: 9px; }
.m10 { margin-left: 10px; }
.m11 { margin-left: 11px; }
.m12 { margin-left: 12px; }
.m13 { margin-left: 13px; }
.m14 { margin-left: 14px; }
.m15 { margin-left: 15px; }
.m16 { margin-left: 16px; }
.m17 { margin-left: 17px; }
.m19 { margin-left: 19px; }
.m21 { margin-left: 21px; }
.m63 { margin-left: 63px; }

.tbox {
  width: 36px;
  height: 37px;
  background: #e6e6e6;
  display: flex;
  align-items: center;
  justify-content: center;
  flex: none;
}

.fit {
  width: 127px;
  height: 28px;
  border: 1px solid #cfcfcf;
  border-radius: 3px;
  background: #f4f4f4;
  display: flex;
  align-items: center;
  flex: none;
  font-size: 17px;
}

.fit-text {
  flex: 1;
  padding-left: 8px;
}

.fit-arrow {
  width: 22px;
  height: 100%;
  border-left: 1px solid #dcdcdc;
  display: flex;
  align-items: center;
  justify-content: center;
}

.showme {
  display: flex;
  align-items: center;
  gap: 7px;
  font-size: 16.700px;
  margin-top: -2px;
}

/* main area */
.workspace {
  height: 550px;
  display: grid;
  grid-template-columns: 212px 172px 976px;
}

.datapane {
  background: #fff;
  border-right: 1px solid #d4d4d4;
  display: flex;
  flex-direction: column;
  overflow: hidden;
}

.panetabs {
  height: 32px;
  display: flex;
  flex: none;
}

.panetab {
  position: relative;
  flex: 1;
  display: flex;
  align-items: center;
  padding-left: 15px;
  font-size: 17px;
  background: #f3f3f3;
  border-top: 1px solid #d4d4d4;
  border-bottom: 1px solid #d4d4d4;
}

.panetab.active {
  flex: 0 0 78px;
  padding-left: 22px;
  padding-bottom: 2px;
  font-size: 16px;
  font-weight: 700;
  color: #222;
  background: #fff;
  border-bottom: 0;
  border-right: 1px solid #d4d4d4;
}

.chev {
  position: absolute;
  right: 7px;
  top: 2px;
  font-size: 16px;
  color: #555;
}

.source {
  height: 37px;
  flex: none;
  display: flex;
  align-items: center;
  gap: 5px;
  padding-left: 23px;
  color: #555;
  border-bottom: 1px solid #e4e4e4;
}

.searchrow {
  height: 44px;
  flex: none;
  display: flex;
  align-items: center;
  padding: 2px 0 0 10px;
}

.search {
  width: 128px;
  height: 28px;
  border: 1px solid #cfcfcf;
  border-radius: 3px;
  display: flex;
  align-items: center;
  justify-content: space-between;
  padding: 0 5px 0 7px;
  color: #aaa;
}

.funnel {
  margin-left: 3px;
}

.vline {
  width: 1px;
  height: 22px;
  background: #d4d4d4;
  margin: 0 7px 0 5px;
}

.searchrow .caret {
  margin-left: 6px;
}

.tables {
  margin: 0;
  height: 29px;
  flex: none;
  padding-left: 22px;
  font-size: 16px;
  line-height: 26px;
  color: #111;
}

.fieldarea {
  flex: 1;
  display: flex;
  min-height: 0;
}

.fields {
  list-style: none;
  margin: 0;
  padding: 0;
  flex: 1;
  overflow: hidden;
  color: #222;
}

.fields li {
  height: 26px;
  display: flex;
  align-items: center;
  white-space: nowrap;
}

.fields li.schema-end {
  height: 28px;
  padding-bottom: 2px;
  margin-left: 18px;
  border-bottom: 1px solid #d9d9d9;
}

.schema-end .abc {
  margin-left: -18px;
}

.abc {
  width: 50px;
  flex: none;
  padding-left: 24px;
  font-size: 8.500px;
  font-weight: 400;
  color: #4f7a94;
}

.hash {
  width: 50px;
  flex: none;
  padding-left: 27px;
  font-weight: 400;
  font-size: 15px;
  color: #4fae8d;
}

.hash.dim {
  color: #4996b2;
}

.fields em {
  font-style: italic;
}

.vscroll {
  background: #f0f0f0;
  display: flex;
  flex-direction: column;
  flex: none;
}

.field-scroll {
  width: 20px;
}

.arrow {
  width: 20px;
  height: 20px;
  flex: none;
}

.arrow.end {
  margin-top: auto;
}

.thumb {
  background: #cdcdcd;
  flex: none;
}

.field-scroll .thumb {
  height: 161px;
}

/* cards column */
.cards {
  padding-left: 6px;
  padding-right: 6px;
  display: flex;
  flex-direction: column;
  gap: 6px;
}

.card {
  background: #f9f9f9;
  border: 1px solid #d4d4d4;
  position: relative;
  overflow: hidden;
  flex: none;
}

.card-title {
  height: 35px;
  padding: 7px 0 0 7px;
  color: #555;
  font-size: 15px;
}

.pages {
  height: 70px;
}

.filters {
  height: 119px;
}

.filters .card-title {
  height: 38px;
}

.marks {
  height: 168px;
}

.values {
  height: 168px;
}

.values .card-title {
  height: 38px;
}

.pill {
  height: 24px;
  border-radius: 12px;
  color: #fff;
  display: flex;
  align-items: center;
  padding-left: 13px;
  flex: none;
  position: relative;
  white-space: nowrap;
}

.pill.blue {
  background: #4996b2;
}

.pill.green {
  background: #00b180;
}

.pill.wide {
  width: 148px;
  margin: 0 0 3px 5px;
}

.pill.long {
  width: 178px;
}

.sort {
  position: absolute;
  right: 14px;
  top: 7px;
  width: 10px;
  height: 10px;
}

.marks-body {
  display: flex;
  height: 132px;
  position: relative;
}

.marks-main {
  flex: 1;
  padding: 7px 0 0 7px;
}

.marks-scroll {
  width: 19px;
  margin-right: 1px;
}

.marks-scroll .arrow {
  width: 19px;
  height: 21px;
}

.marks-scroll .thumb {
  height: 52px;
}

.marktype {
  width: 123px;
  height: 24px;
  border: 1px solid #d4d4d4;
  border-radius: 2px;
  background: #fff;
  display: flex;
  align-items: center;
  font-size: 13.500px;
  color: #555;
}

.mt-label {
  flex: 1;
  display: flex;
  align-items: center;
  gap: 7px;
  padding-left: 12px;
}

.mt-arrow {
  width: 22px;
  height: 100%;
  border-left: 1px solid #d4d4d4;
  display: flex;
  align-items: center;
  justify-content: center;
}

.markbtns {
  margin-top: 7px;
  display: grid;
  grid-template-columns: 36px 37px 35px;
  column-gap: 7px;
  row-gap: 7px;
}

.markbtn {
  height: 52px;
  border: 1px solid #d9d9d9;
  background: #f9f9f9;
  display: flex;
  flex-direction: column;
  align-items: center;
  padding-top: 5px;
  font-size: 12px;
  color: #444;
}

.markbtn span {
  margin-top: 3px;
  line-height: 14px;
}

.miniscroll {
  position: absolute;
  right: 1px;
  bottom: 0;
  width: 16px;
  display: flex;
  flex-direction: column;
}

.miniscroll span {
  height: 15px;
  background: #e6e6e6;
  border: 1px solid #ccc;
  display: flex;
}

.miniscroll svg {
  width: 14px;
  height: 13px;
}

/* right column */
.viewcol {
  display: flex;
  flex-direction: column;
  gap: 6px;
}

.shelf {
  height: 32px;
  background: #f9f9f9;
  border: 1px solid #d4d4d4;
  display: flex;
  align-items: center;
  flex: none;
  gap: 2px;
}

.shelf-label {
  width: 159px;
  height: 100%;
  padding-left: 8px;
  border-right: 1px solid #d4d4d4;
  display: flex;
  align-items: center;
  gap: 6px;
  color: #555;
}

.view {
  height: 467px;
  border: 1px solid #d4d4d4;
  background: #f0f7fb;
  overflow: hidden;
}

.chart {
  display: block;
  margin: -1px;
}

.chart-title {
  font-size: 23.500px;
  font-weight: 700;
  fill: #333;
  text-anchor: middle;
}

.axis {
  font-size: 14px;
  fill: #7f8a91;
}

.axis.mid {
  text-anchor: middle;
}

.axis.end {
  text-anchor: end;
}

.rule {
  stroke: #cfcfcf;
  fill: none;
}

.ticks {
  stroke: #999;
  fill: none;
}

.seg path {
  fill: none;
  stroke-width: 4;
  stroke-linecap: round;
}

.dots circle {
  r: 3.500px;
}

.labels text {
  font-size: 15.500px;
  fill: #2a2a2a;
  text-anchor: middle;
}

/* tabs */
.tabs {
  height: 37px;
  background: #e6e6e6;
  border-top: 1px solid #d4d4d4;
  border-bottom: 1px solid #d4d4d4;
  display: flex;
  color: #666;
}

.tab {
  display: flex;
  align-items: center;
  padding-left: 6px;
  border-right: 2px solid #d4d4d4;
  flex: none;
  white-space: nowrap;
  overflow: hidden;
}

.source-tab {
  width: 163px;
  padding-left: 10px;
  gap: 5px;
}

.t-annual {
  width: 128px;
  padding-left: 7px;
}

.t-adv {
  width: 158px;
}

.t-contract {
  width: 226px;
}

.t-emp {
  width: 250px;
}

.t-equip {
  width: 138px;
}

.t-exp {
  width: 240px;
  background: #fff;
  font-weight: 700;
  border-right: 0;
}

.tab-actions {
  margin-left: auto;
  display: flex;
  padding-right: 1px;
}

.tab-actions span {
  width: 32px;
  display: flex;
  align-items: center;
  justify-content: center;
  border-left: 1px solid #d4d4d4;
}

/* status */
.statusbar {
  height: 26px;
  background: #ebebeb;
  display: flex;
  align-items: center;
  font-size: 13px;
  color: #333;
  padding-left: 3px;
}

.st-marks {
  width: 76px;
}

.st-rows {
  width: 143px;
}

.st-sum {
  width: 726px;
  height: 100%;
  display: flex;
  align-items: center;
  border-right: 1px solid #d4d4d4;
}

.st-right {
  margin-left: auto;
  display: flex;
  gap: 10px;
  padding-right: 6px;
  align-items: center;
}

/* taskbar */
.taskbar {
  height: 50px;
  background: #0a0a0a;
  display: flex;
  align-items: stretch;
  color: #fff;
}

.start {
  width: 60px;
  display: flex;
  align-items: center;
  justify-content: center;
}

.searchbox {
  width: 430px;
  background: #f0f0f0;
  display: flex;
  align-items: center;
  padding-left: 12px;
  color: #222;
  font-size: 16.700px;
  gap: 12px;
}

.mic {
  margin-left: auto;
  margin-right: 18px;
}

.task {
  width: 62px;
  display: flex;
  align-items: center;
  justify-content: center;
  position: relative;
  flex: none;
}

.taskview {
  width: 63px;
}

.task.open::after {
  content: "";
  position: absolute;
  left: 0;
  right: 0;
  bottom: 0;
  height: 3px;
  background: #76b9ed;
  margin: 0 5px;
}

.task.split::before {
  content: "";
  position: absolute;
  right: 5px;
  bottom: 0;
  width: 11px;
  height: 3px;
  background: #4a87b8;
  z-index: 1;
}

.task.active {
  background: #3b3b3b;
}

.task.active::after {
  margin: 0;
}

.tray {
  flex: 1;
  display: flex;
  align-items: center;
  padding-left: 45px;
  font-size: 14px;
}

.tr-up {
  margin-left: 25px;
}

.tr-batt {
  margin-left: 13px;
}

.tr-vol {
  margin-left: 7px;
}

.eng {
  margin-left: 4px;
  width: 45px;
  height: 100%;
  background: #262626;
  display: flex;
  align-items: center;
  justify-content: center;
}

.clock {
  width: 92px;
  text-align: center;
  line-height: 22px;
}

.tr-note {
  margin-left: 15px;
}

/* language tooltip */
.tooltip {
  position: absolute;
  left: 1092px;
  top: 613px;
  width: 215px;
  height: 104px;
  padding: 2px 5px;
  background: #fff;
  border: 1px solid #767676;
  box-shadow: 3px 3px 4px rgba(0, 0, 0, 0.25);
  color: #575757;
  font-size: 14px;
  line-height: 20px;
  white-space: nowrap;
}
```
